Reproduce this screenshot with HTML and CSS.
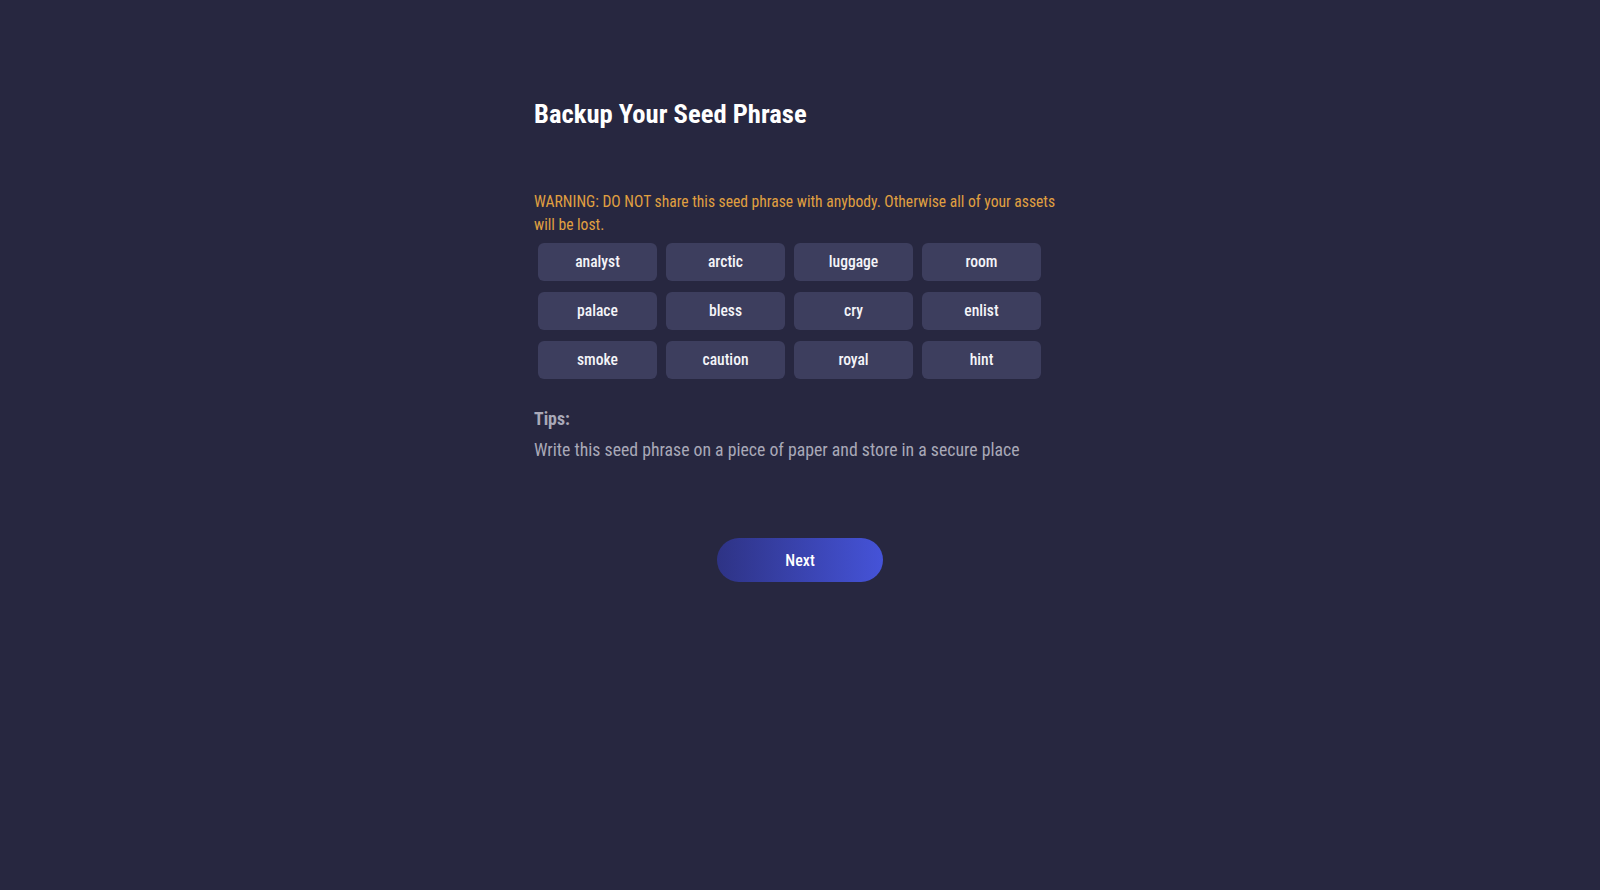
FILE: index.html
```html
<!DOCTYPE html>
<html lang="en">
<head>
<meta charset="utf-8">
<title>Backup Your Seed Phrase</title>
<link rel="stylesheet" href="styles.css">
</head>
<body>
<main class="page">
  <section class="card">
    <h1 class="title">Backup Your Seed Phrase</h1>
    <p class="warning">WARNING: DO NOT share this seed phrase with anybody. Otherwise all of your assets will be lost.</p>
    <div class="words">
      <div class="word">analyst</div>
      <div class="word">arctic</div>
      <div class="word">luggage</div>
      <div class="word">room</div>
      <div class="word">palace</div>
      <div class="word">bless</div>
      <div class="word">cry</div>
      <div class="word">enlist</div>
      <div class="word">smoke</div>
      <div class="word">caution</div>
      <div class="word">royal</div>
      <div class="word">hint</div>
    </div>
    <div class="tips">
      <div class="tips-label">Tips:</div>
      <div class="tips-text">Write this seed phrase on a piece of paper and store in a secure place</div>
    </div>
    <div class="actions">
      <button class="next" type="button">Next</button>
    </div>
  </section>
</main>
</body>
</html>
```
FILE: styles.css
```css
html, body {
  margin: 0;
  padding: 0;
  height: 100%;
}
body {
  background: #272740;
  font-family: "Roboto Condensed", Roboto, "Liberation Sans", sans-serif;
  font-stretch: 75%;
  color: #ffffff;
}
.page {
  display: flex;
  justify-content: center;
  padding-top: 97px;
}
.card {
  width: 532px;
  display: flex;
  flex-direction: column;
}
.title {
  margin: 0;
  font-size: 26.6px;
  line-height: 34px;
  font-weight: 700;
  color: #ffffff;
}
.warning {
  margin: 60px 0 0;
  font-size: 15.6px;
  line-height: 23px;
  color: #e0a040;
}
.words {
  display: grid;
  grid-template-columns: repeat(4, 119px);
  column-gap: 9px;
  row-gap: 11px;
  padding: 6px 4px 5px;
}
.word {
  height: 38px;
  display: flex;
  align-items: center;
  justify-content: center;
  background: #3d3e5e;
  border-radius: 6px;
  font-size: 15.6px;
  font-weight: 500;
  color: #f4f4f8;
}
.tips {
  margin-top: 22px;
  color: #a9a9b8;
  font-size: 17.75px;
}
.tips-label {
  font-weight: 700;
  line-height: 26px;
}
.tips-text {
  margin-top: 4px;
  line-height: 28px;
}
.actions {
  display: flex;
  justify-content: center;
  margin-top: 74px;
}
.next {
  width: 166px;
  height: 44px;
  border: none;
  border-radius: 22px;
  background: linear-gradient(90deg, #2e3385 0%, #4553d8 100%);
  color: #ffffff;
  font-family: inherit;
  font-stretch: 75%;
  font-size: 16px;
  font-weight: 500;
  cursor: pointer;
}
```
